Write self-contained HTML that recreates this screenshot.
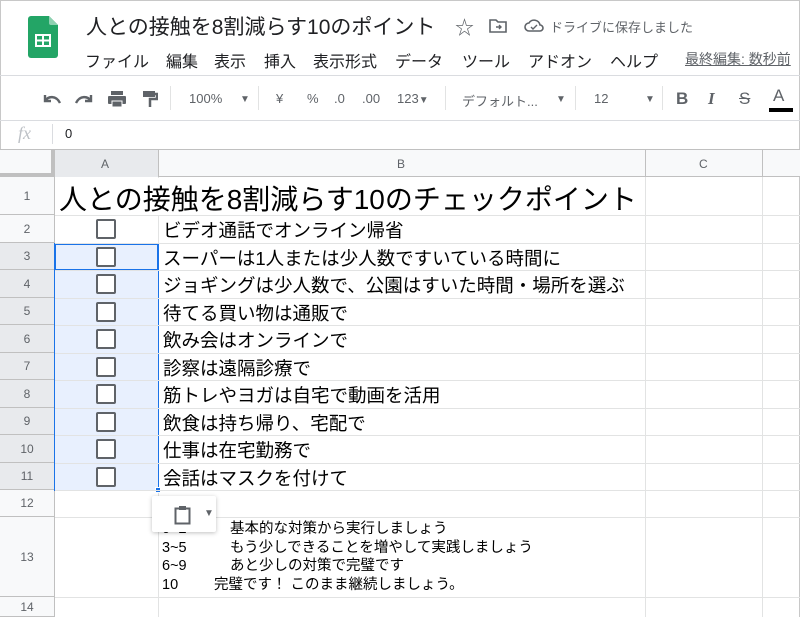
<!DOCTYPE html>
<html><head><meta charset="utf-8"><style>
*{margin:0;padding:0;box-sizing:border-box}
body{width:800px;height:617px;overflow:hidden;background:#fff;font-family:"Liberation Sans","Noto Sans CJK JP",sans-serif;position:relative;color:#202124}
.a{position:absolute;white-space:nowrap}
.hl{position:absolute;height:1px;background:#e2e3e3}
.vl{position:absolute;width:1px;background:#e2e3e3}
.rh{position:absolute;left:0;width:54px;background:#f8f9fa;color:#5f6368;font-size:12px;text-align:center;border-bottom:1px solid #c0c0c0}
.cb{position:absolute;left:96px;width:20px;height:20px;border:2px solid #5f6368;border-radius:2px;background:#fff}
.t{position:absolute;left:163px;font-size:18.5px;color:#000}
.tb{position:absolute;white-space:nowrap;color:#5f6368;font-size:13px;top:91px}
.m{position:absolute;top:48px;font-size:16px;color:#202124;white-space:nowrap}
</style></head><body>
<div class="a" style="left:0;top:0;width:800px;height:617px;border:1px solid #c8c8c8;border-bottom:none"></div>
<svg class="a" style="left:28px;top:16px" width="30" height="42" viewBox="0 0 30 42"><path d="M3 0h18l9 9v30a3 3 0 0 1-3 3H3a3 3 0 0 1-3-3V3a3 3 0 0 1 3-3z" fill="#23a566"/><path d="M21 0l9 9h-7a2 2 0 0 1-2-2z" fill="#8ed1b1"/><rect x="8" y="19" width="14" height="11" fill="none" stroke="#fff" stroke-width="2"/><path d="M8 24.5h14M15 19v11" stroke="#fff" stroke-width="2"/></svg>
<div class="a" style="left:86px;top:11px;font-size:21px;color:#202124">人との接触を8割減らす10のポイント</div>
<div class="a" style="left:455px;top:13px;font-size:19px;color:#5f6368">☆</div>
<svg class="a" style="left:489px;top:18px" width="18" height="15"><path d="M1 2h6l2 2h8v10H1z" fill="none" stroke="#5f6368" stroke-width="1.6"/><path d="M7 9h5M10 7l2 2-2 2" stroke="#5f6368" stroke-width="1.4" fill="none"/></svg>
<svg class="a" style="left:524px;top:17px" width="20" height="16"><path d="M5 14a4 4 0 0 1 0-8 6 6 0 0 1 11 2 3 3 0 0 1 0 6z" fill="none" stroke="#5f6368" stroke-width="1.6"/><path d="M7 10l2 2 4-4" stroke="#5f6368" stroke-width="1.4" fill="none"/></svg>
<div class="a" style="left:550px;top:17px;font-size:13px;color:#5f6368">ドライブに保存しました</div>
<div class="m" style="left:85px">ファイル</div>
<div class="m" style="left:166px">編集</div>
<div class="m" style="left:214px">表示</div>
<div class="m" style="left:264px">挿入</div>
<div class="m" style="left:313px">表示形式</div>
<div class="m" style="left:395px">データ</div>
<div class="m" style="left:462px">ツール</div>
<div class="m" style="left:528px">アドオン</div>
<div class="m" style="left:610px">ヘルプ</div>
<div class="a" style="left:685px;top:49px;font-size:14px;color:#5f6368;text-decoration:underline">最終編集: 数秒前</div>
<div class="hl" style="left:0;top:75px;width:800px;background:#dadce0"></div>
<svg class="a" style="left:42px;top:92px" width="20" height="14"><path d="M3 3v6h6M3 9c3-5 11-6 15 2" stroke="#5f6368" stroke-width="2.4" fill="none"/></svg>
<svg class="a" style="left:74px;top:92px" width="20" height="14"><path d="M17 3v6h-6M17 9c-3-5-11-6-15 2" stroke="#5f6368" stroke-width="2.4" fill="none"/></svg>
<svg class="a" style="left:107px;top:90px" width="20" height="18"><rect x="4" y="1" width="12" height="4" fill="#5f6368"/><rect x="1" y="6" width="18" height="8" rx="1" fill="#5f6368"/><rect x="5" y="11" width="10" height="6" fill="#5f6368" stroke="#fff" stroke-width="1"/></svg>
<svg class="a" style="left:142px;top:90px" width="16" height="18"><rect x="1" y="1" width="12" height="6" fill="#5f6368"/><path d="M13 4h2v5H8v8" stroke="#5f6368" stroke-width="2.5" fill="none"/></svg>
<div class="vl" style="left:170px;top:86px;height:24px"></div>
<div class="tb" style="left:189px">100%</div><div class="tb" style="left:240px;font-size:10px;top:94px">▼</div>
<div class="vl" style="left:258px;top:86px;height:24px"></div>
<div class="tb" style="left:276px">¥</div>
<div class="tb" style="left:307px">%</div>
<div class="tb" style="left:334px">.0</div>
<div class="tb" style="left:362px">.00</div>
<div class="tb" style="left:397px">123<span style="font-size:10px">▼</span></div>
<div class="vl" style="left:445px;top:86px;height:24px"></div>
<div class="tb" style="left:462px">デフォルト...</div><div class="tb" style="left:556px;font-size:10px;top:94px">▼</div>
<div class="vl" style="left:575px;top:86px;height:24px"></div>
<div class="tb" style="left:594px">12</div><div class="tb" style="left:645px;font-size:10px;top:94px">▼</div>
<div class="vl" style="left:662px;top:86px;height:24px"></div>
<div class="a" style="left:676px;top:89px;font-size:17px;font-weight:bold;color:#5f6368">B</div>
<div class="a" style="left:708px;top:89px;font-size:17px;font-style:italic;font-weight:bold;color:#5f6368;font-family:'Liberation Serif',serif">I</div>
<div class="a" style="left:739px;top:89px;font-size:17px;color:#5f6368;text-decoration:line-through">S</div>
<div class="a" style="left:773px;top:86px;font-size:17px;color:#5f6368">A</div>
<div class="a" style="left:769px;top:108px;width:24px;height:4px;background:#000"></div>
<div class="hl" style="left:0;top:120px;width:800px;background:#dadce0"></div>
<div class="a" style="left:18px;top:123px;font-size:18px;font-style:italic;color:#bdc1c6;font-family:'Liberation Serif',serif">fx</div>
<div class="vl" style="left:52px;top:124px;height:20px;background:#dadce0"></div>
<div class="a" style="left:65px;top:126px;font-size:13px">0</div>
<div class="a" style="left:0;top:149px;width:800px;height:28px;background:#f8f9fa;border-top:1px solid #c0c0c0;border-bottom:1px solid #c0c0c0"></div>
<div class="a" style="left:54px;top:150px;width:104px;height:27px;background:#e8eaed"></div>
<div class="a" style="left:51px;top:149px;width:4px;height:468px;background:#c0c0c0"></div>
<div class="a" style="left:0;top:149px;width:54px;height:28px;border-bottom:4px solid #c0c0c0"></div>
<div class="a" style="left:101px;top:157px;font-size:12px;color:#5f6368">A</div>
<div class="a" style="left:397px;top:157px;font-size:12px;color:#5f6368">B</div>
<div class="a" style="left:699px;top:157px;font-size:12px;color:#5f6368">C</div>
<div class="vl" style="left:158px;top:150px;height:467px"></div>
<div class="vl" style="left:645px;top:150px;height:467px"></div>
<div class="vl" style="left:762px;top:150px;height:467px"></div>
<div class="vl" style="left:158px;top:150px;height:27px;background:#c0c0c0"></div>
<div class="vl" style="left:645px;top:150px;height:27px;background:#c0c0c0"></div>
<div class="vl" style="left:762px;top:150px;height:27px;background:#c0c0c0"></div>
<div class="a" style="left:54px;top:243px;width:104px;height:247px;background:#e8f0fe"></div>
<div class="a" style="left:54px;top:243px;width:105px;height:28px;border:2px solid #1a73e8"></div>
<div class="a" style="left:54px;top:243px;width:105px;height:248px;border:1px solid #1a73e8"></div>
<div class="a" style="left:155px;top:487px;width:6px;height:6px;background:#1a73e8;border:1px solid #fff"></div>
<div class="rh" style="top:177px;height:38px;line-height:38px">1</div>
<div class="rh" style="top:215px;height:28px;line-height:28px">2</div>
<div class="rh" style="top:243px;height:27px;line-height:27px;background:#e8eaed">3</div>
<div class="rh" style="top:270px;height:28px;line-height:28px;background:#e8eaed">4</div>
<div class="rh" style="top:298px;height:27px;line-height:27px;background:#e8eaed">5</div>
<div class="rh" style="top:325px;height:28px;line-height:28px;background:#e8eaed">6</div>
<div class="rh" style="top:353px;height:27px;line-height:27px;background:#e8eaed">7</div>
<div class="rh" style="top:380px;height:28px;line-height:28px;background:#e8eaed">8</div>
<div class="rh" style="top:408px;height:27px;line-height:27px;background:#e8eaed">9</div>
<div class="rh" style="top:435px;height:28px;line-height:28px;background:#e8eaed">10</div>
<div class="rh" style="top:463px;height:27px;line-height:27px;background:#e8eaed">11</div>
<div class="rh" style="top:490px;height:27px;line-height:27px">12</div>
<div class="rh" style="top:517px;height:80px;line-height:80px">13</div>
<div class="rh" style="top:597px;height:20px;line-height:20px">14</div>
<div class="hl" style="left:55px;top:215px;width:745px"></div>
<div class="hl" style="left:55px;top:243px;width:745px"></div>
<div class="hl" style="left:55px;top:270px;width:745px"></div>
<div class="hl" style="left:55px;top:298px;width:745px"></div>
<div class="hl" style="left:55px;top:325px;width:745px"></div>
<div class="hl" style="left:55px;top:353px;width:745px"></div>
<div class="hl" style="left:55px;top:380px;width:745px"></div>
<div class="hl" style="left:55px;top:408px;width:745px"></div>
<div class="hl" style="left:55px;top:435px;width:745px"></div>
<div class="hl" style="left:55px;top:463px;width:745px"></div>
<div class="hl" style="left:55px;top:490px;width:745px"></div>
<div class="hl" style="left:55px;top:517px;width:745px"></div>
<div class="hl" style="left:55px;top:597px;width:745px"></div>
<div class="a" style="left:55px;top:178px;width:590px;height:37px;background:#fff"></div>
<div class="a" style="left:59px;top:178px;font-size:28px;color:#000">人との接触を8割減らす10のチェックポイント</div>
<div class="cb" style="top:219px"></div>
<div class="cb" style="top:247px"></div>
<div class="cb" style="top:274px"></div>
<div class="cb" style="top:302px"></div>
<div class="cb" style="top:329px"></div>
<div class="cb" style="top:357px"></div>
<div class="cb" style="top:384px"></div>
<div class="cb" style="top:412px"></div>
<div class="cb" style="top:439px"></div>
<div class="cb" style="top:467px"></div>
<div class="t" style="top:217px">ビデオ通話でオンライン帰省</div>
<div class="t" style="top:245px">スーパーは1人または少人数ですいている時間に</div>
<div class="t" style="top:272px">ジョギングは少人数で、公園はすいた時間・場所を選ぶ</div>
<div class="t" style="top:300px">待てる買い物は通販で</div>
<div class="t" style="top:327px">飲み会はオンラインで</div>
<div class="t" style="top:355px">診察は遠隔診療で</div>
<div class="t" style="top:382px">筋トレやヨガは自宅で動画を活用</div>
<div class="t" style="top:410px">飲食は持ち帰り、宅配で</div>
<div class="t" style="top:437px">仕事は在宅勤務で</div>
<div class="t" style="top:465px">会話はマスクを付けて</div>
<div class="a" style="left:162px;top:520px;font-size:14.5px;line-height:18.5px;color:#000">
<div>0~2<span style="position:absolute;left:68px">基本的な対策から実行しましょう</span></div>
<div>3~5<span style="position:absolute;left:68px">もう少しできることを増やして実践しましょう</span></div>
<div>6~9<span style="position:absolute;left:68px">あと少しの対策で完璧です</span></div>
<div>10<span style="position:absolute;left:52px">完璧です！ このまま継続しましょう。</span></div>
</div>
<div class="a" style="left:152px;top:496px;width:64px;height:36px;background:#fff;box-shadow:0 1px 4px rgba(0,0,0,.25);border-radius:2px"></div>
<svg class="a" style="left:174px;top:505px" width="18" height="20"><rect x="1.5" y="3.5" width="14" height="15" fill="none" stroke="#5f6368" stroke-width="2"/><rect x="5" y="1" width="7" height="4" fill="#5f6368"/></svg>
<div class="a" style="left:204px;top:508px;font-size:10px;color:#5f6368">▼</div>
</body></html>
